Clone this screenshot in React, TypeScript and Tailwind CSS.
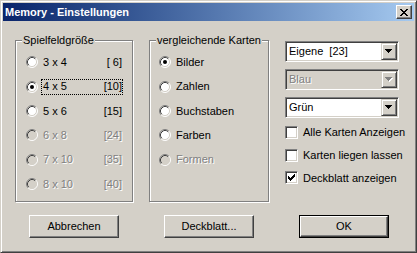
import type { ReactNode } from 'react'

/* ─── Classic controls ────────────────────────────────────────────────────── */

const FACE = '#d4d0c8'

function Radio({ checked = false, disabled = false }: { checked?: boolean; disabled?: boolean }) {
  return (
    <svg width="12" height="12" viewBox="0 0 12 12" className="shrink-0">
      <circle cx="6" cy="6" r="5" fill={disabled ? FACE : '#fff'} />
      <path d="M2.11 9.89A5.5 5.5 0 0 1 9.89 2.11" stroke="#808080" fill="none" />
      <path d="M2.82 9.18A4.5 4.5 0 0 1 9.18 2.82" stroke="#404040" fill="none" />
      <path d="M9.89 2.11A5.5 5.5 0 0 1 2.11 9.89" stroke="#fff" fill="none" />
      <path d="M9.18 2.82A4.5 4.5 0 0 1 2.82 9.18" stroke={FACE} fill="none" />
      {checked && <circle cx="6" cy="6" r="2" fill="#000" />}
    </svg>
  )
}

function Checkbox({ checked = false }: { checked?: boolean }) {
  return (
    <span className="flex h-[13px] w-[13px] shrink-0 border border-t-[#808080] border-l-[#808080] border-r-white border-b-white bg-white shadow-[inset_1px_1px_#404040,inset_-1px_-1px_#d4d0c8]">
      {checked && (
        <svg width="11" height="11" viewBox="0 0 11 11" shapeRendering="crispEdges">
          <path
            d="M2 4h1v3H2z M3 5h1v3H3z M4 6h1v3H4z M5 5h1v3H5z M6 4h1v3H6z M7 3h1v3H7z M8 2h1v3H8z"
            fill="#000"
          />
        </svg>
      )}
    </span>
  )
}

function Combo({ value, disabled = false }: { value: string; disabled?: boolean }) {
  return (
    <div
      className={`flex h-[21px] w-[114px] border border-t-[#808080] border-l-[#808080] border-r-white border-b-white p-[1px] shadow-[inset_1px_1px_#404040,inset_-1px_-1px_#d4d0c8] ${
        disabled ? 'bg-[#d4d0c8]' : 'bg-white'
      }`}
    >
      <span
        className={`flex-1 whitespace-pre pl-[2px] leading-[17px] ${
          disabled ? 'text-[#808080] [text-shadow:1px_1px_0_#fff]' : 'text-black'
        }`}
      >
        {value}
      </span>
      <span className="flex h-[17px] w-[16px] items-center justify-center border border-t-[#d4d0c8] border-l-[#d4d0c8] border-r-[#404040] border-b-[#404040] bg-[#d4d0c8] shadow-[inset_1px_1px_#fff,inset_-1px_-1px_#808080]">
        <svg width="8" height="5" viewBox="0 0 8 5" shapeRendering="crispEdges">
          {disabled && <path d="M1 1h7v1H1z M2 2h5v1H2z M3 3h3v1H3z M4 4h1v1H4z" fill="#fff" />}
          <path d="M0 0h7v1H0z M1 1h5v1H1z M2 2h3v1H2z M3 3h1v1H3z" fill={disabled ? '#808080' : '#000'} />
        </svg>
      </span>
    </div>
  )
}

function Button({ children, isDefault = false }: { children: ReactNode; isDefault?: boolean }) {
  return (
    <div className={`flex h-[23px] w-[90px] ${isDefault ? 'border border-black' : ''}`}>
      <span className="flex h-full w-full items-center justify-center border border-t-white border-l-white border-r-[#404040] border-b-[#404040] bg-[#d4d0c8] shadow-[inset_-1px_-1px_#808080]">
        {children}
      </span>
    </div>
  )
}

function GroupBox({ title, width, children }: { title: string; width: string; children: ReactNode }) {
  return (
    <div
      className={`relative flex h-[162px] flex-col border border-[#808080] shadow-[inset_1px_1px_#fff,1px_1px_#fff] ${width}`}
    >
      <span className="absolute left-[6px] top-[-7px] bg-[#d4d0c8] px-[1px] leading-[13px]">{title}</span>
      {children}
    </div>
  )
}

/* ─── Data ────────────────────────────────────────────────────────────────── */

const SIZES = [
  { label: '3 x 4', count: '[ 6]', checked: false, disabled: false },
  { label: '4 x 5', count: '[10]', checked: true, disabled: false },
  { label: '5 x 6', count: '[15]', checked: false, disabled: false },
  { label: '6 x 8', count: '[24]', checked: false, disabled: true },
  { label: '7 x 10', count: '[35]', checked: false, disabled: true },
  { label: '8 x 10', count: '[40]', checked: false, disabled: true },
]

const KINDS = [
  { label: 'Bilder', checked: true, disabled: false },
  { label: 'Zahlen', checked: false, disabled: false },
  { label: 'Buchstaben', checked: false, disabled: false },
  { label: 'Farben', checked: false, disabled: false },
  { label: 'Formen', checked: false, disabled: true },
]

const OPTIONS = [
  { label: 'Alle Karten Anzeigen', checked: false },
  { label: 'Karten liegen lassen', checked: false },
  { label: 'Deckblatt anzeigen', checked: true },
]

const greyed = 'text-[#808080] [text-shadow:1px_1px_0_#fff]'

/* ─── Dialog ──────────────────────────────────────────────────────────────── */

export default function App() {
  return (
    <div
      className="flex h-[253px] w-[417px] flex-col border border-t-[#d4d0c8] border-l-[#d4d0c8] border-r-[#404040] border-b-[#404040] bg-[#d4d0c8] p-[2px] text-[11px] text-black shadow-[inset_1px_1px_#fff,inset_-1px_-1px_#808080]"
      style={{ fontFamily: '"Liberation Sans", Arial, sans-serif' }}
    >
      {/* Title bar */}
      <div className="flex h-[18px] shrink-0 items-center justify-between bg-gradient-to-r from-[#0a246a] to-[#a6caf0] pl-[2px] pr-[2px]">
        <span className="text-[11px] font-bold leading-[18px] text-white">Memory - Einstellungen</span>
        <span className="flex h-[14px] w-[16px] items-center justify-center border border-t-white border-l-white border-r-[#404040] border-b-[#404040] bg-[#d4d0c8] shadow-[inset_-1px_-1px_#808080]">
          <svg width="8" height="7" viewBox="0 0 8 7" shapeRendering="crispEdges">
            <path
              d="M0 0h2v1H0z M6 0h2v1H6z M1 1h2v1H1z M5 1h2v1H5z M2 2h4v1H2z M3 3h2v1H3z M2 4h4v1H2z M1 5h2v1H1z M5 5h2v1H5z M0 6h2v1H0z M6 6h2v1H6z"
              fill="#000"
            />
          </svg>
        </span>
      </div>

      {/* Groups + options */}
      <div className="mt-[19px] flex pl-[12px]">
        <GroupBox title="Spielfeldgröße" width="w-[118px]">
          <div className="flex flex-col pl-[10px] pt-[9px]">
            {SIZES.map((s) => (
              <div key={s.label} className="flex h-[24.375px] items-center">
                <Radio checked={s.checked} disabled={s.disabled} />
                <span
                  className={`ml-[3px] flex h-[16px] w-[82px] items-center justify-between pl-[1px] ${
                    s.checked ? 'border border-dotted border-black' : 'border border-transparent'
                  } ${s.disabled ? greyed : ''}`}
                >
                  <span>{s.label}</span>
                  <span className="whitespace-pre">{s.count}</span>
                </span>
              </div>
            ))}
          </div>
        </GroupBox>

        <div className="ml-[16px]">
          <GroupBox title="vergleichende Karten" width="w-[120px]">
            <div className="flex flex-col pl-[9px] pt-[9px]">
              {KINDS.map((k) => (
                <div key={k.label} className="flex h-[24.375px] items-center">
                  <Radio checked={k.checked} disabled={k.disabled} />
                  <span className={`ml-[5px] ${k.disabled ? greyed : ''}`}>{k.label}</span>
                </div>
              ))}
            </div>
          </GroupBox>
        </div>

        <div className="ml-[16px] flex w-[114px] flex-col pt-[1px]">
          <div className="flex flex-col gap-[7px]">
            <Combo value="Eigene  [23]" />
            <Combo value="Blau" disabled />
            <Combo value="Grün" />
          </div>
          <div className="mt-[3px] flex flex-col">
            {OPTIONS.map((o) => (
              <div key={o.label} className="flex h-[22.75px] items-center whitespace-nowrap">
                <Checkbox checked={o.checked} />
                <span className="ml-[5px]">{o.label}</span>
              </div>
            ))}
          </div>
        </div>
      </div>

      {/* Buttons */}
      <div className="mt-[13px] flex pl-[26px]">
        <Button>Abbrechen</Button>
        <div className="ml-[45px]">
          <Button>Deckblatt...</Button>
        </div>
        <div className="ml-[45px]">
          <Button isDefault>OK</Button>
        </div>
      </div>
    </div>
  )
}
